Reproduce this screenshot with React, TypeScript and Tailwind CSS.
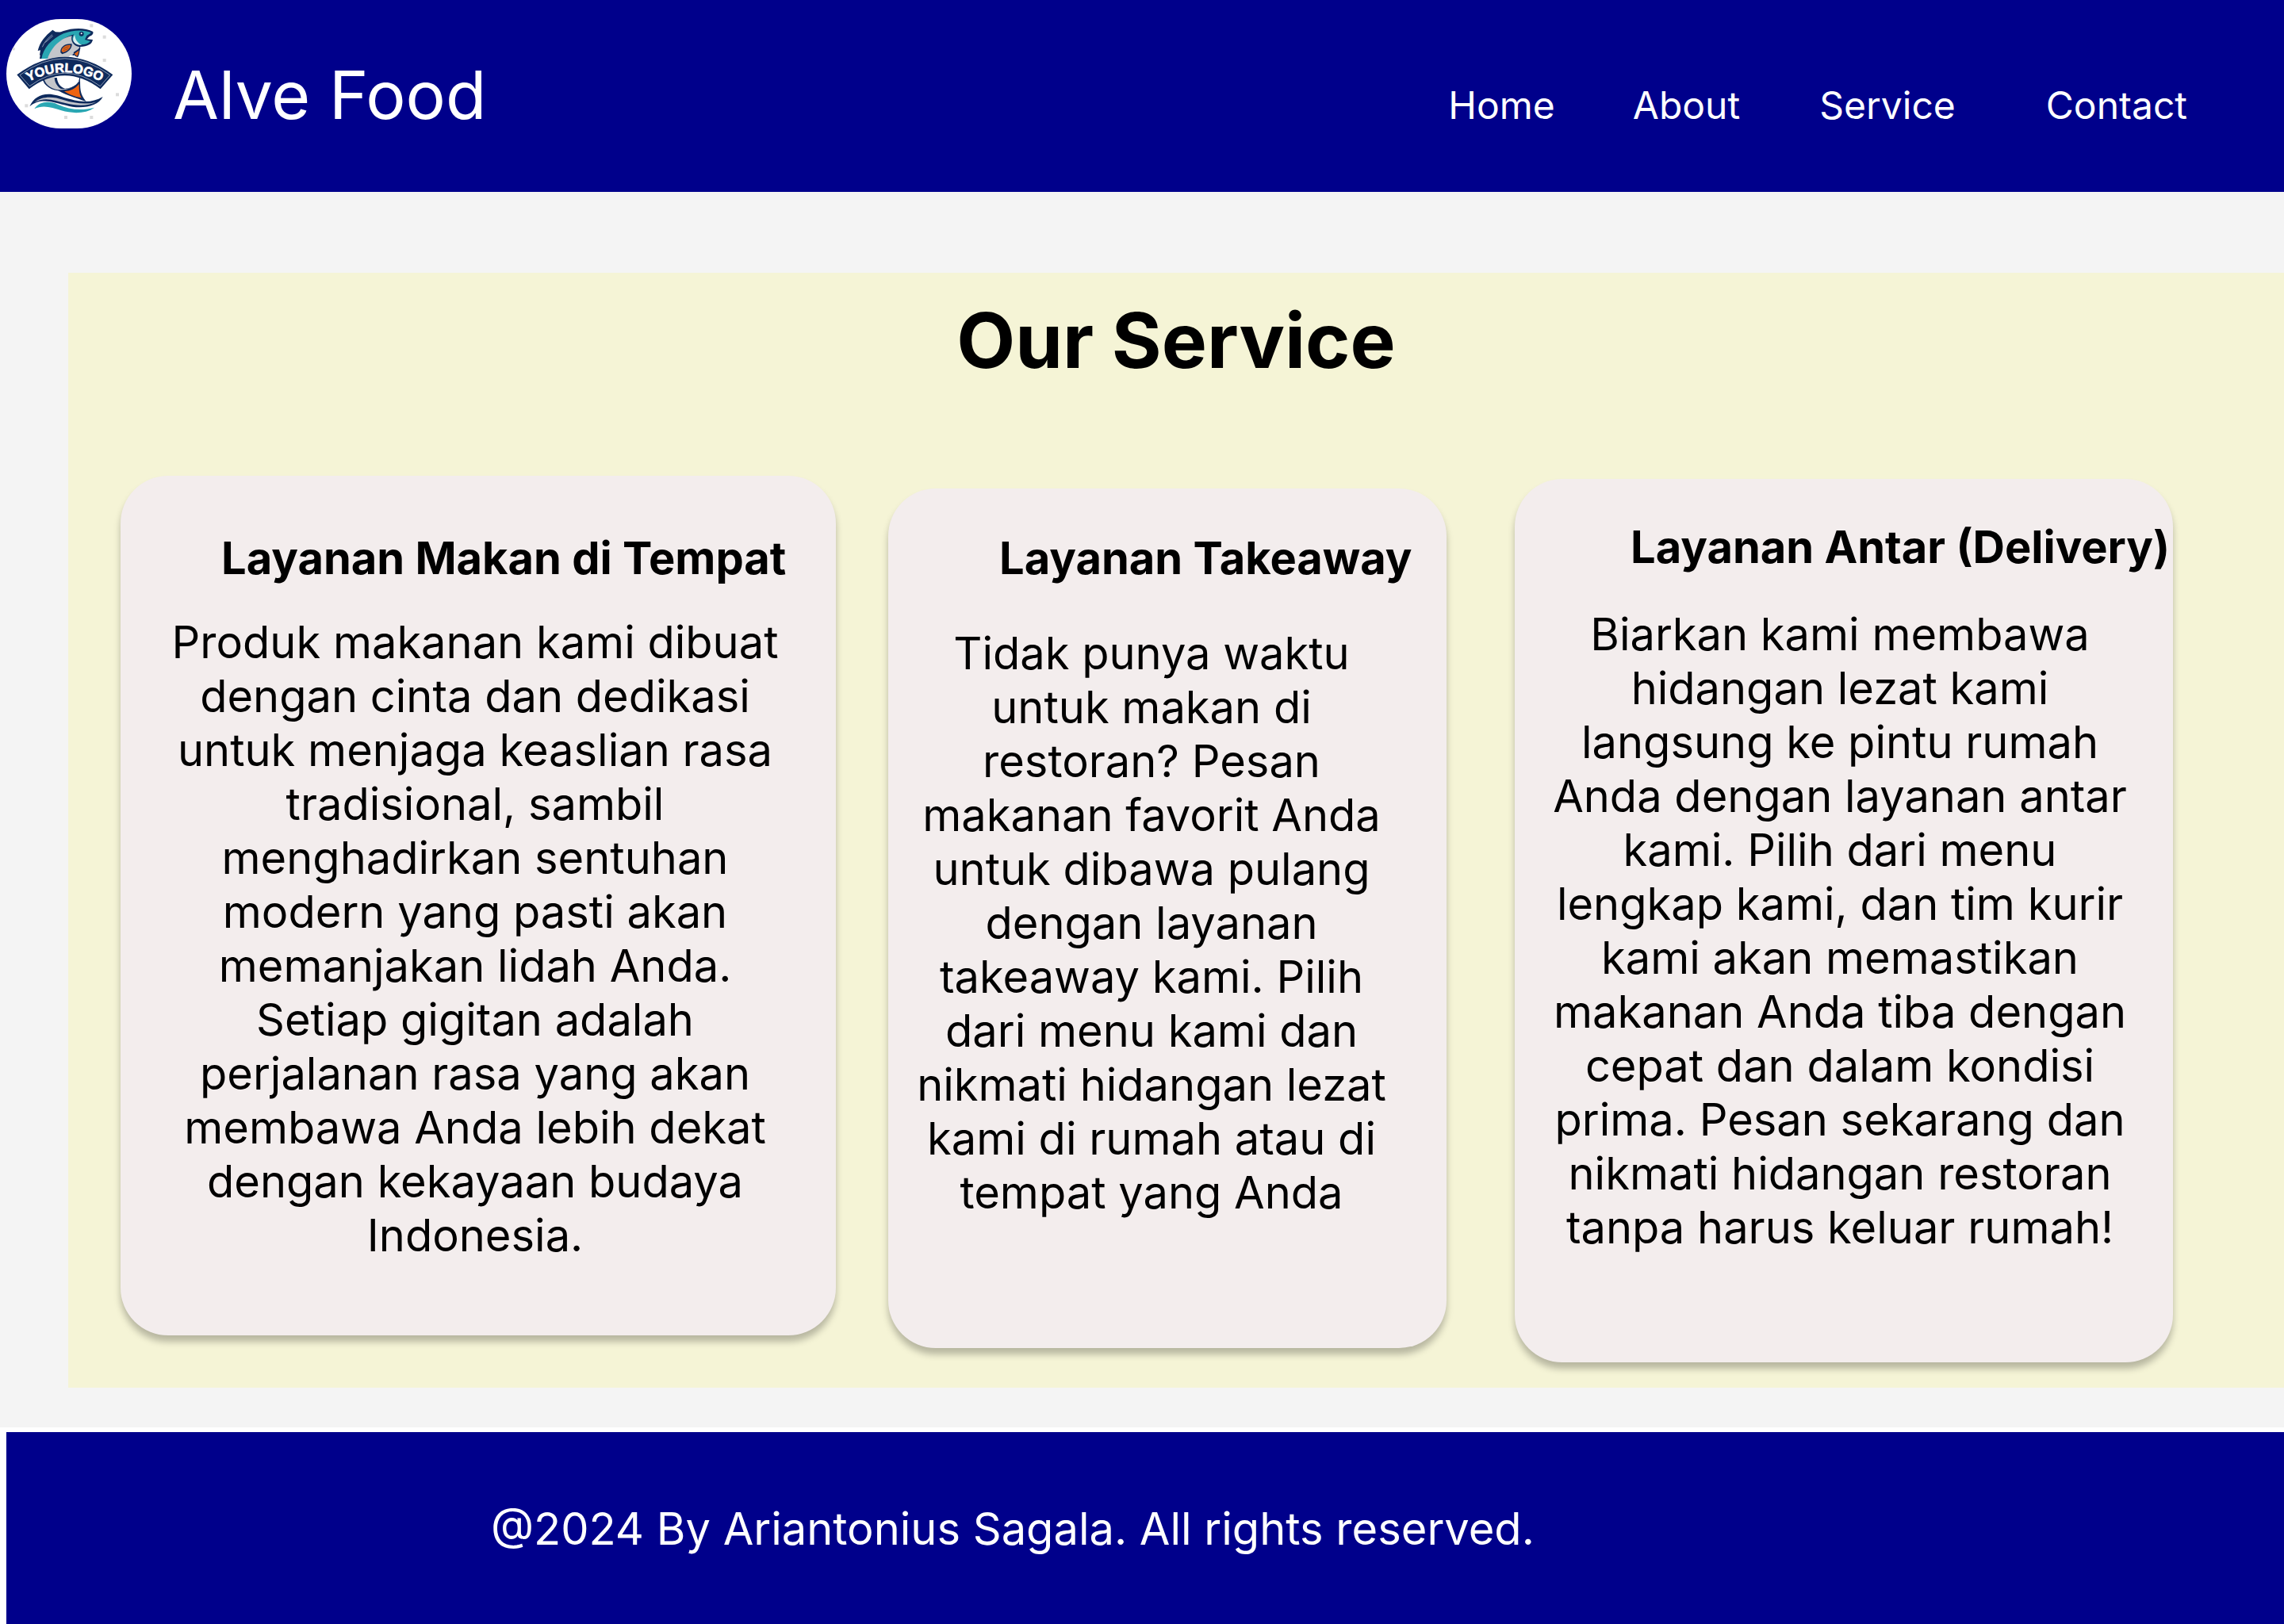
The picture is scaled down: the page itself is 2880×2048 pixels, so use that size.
import React from "react";

type Service = {
  title: string;
  text: string;
  card: string;
  heading: string;
  body: string;
};

const links = [
  { label: "Home", gap: "" },
  { label: "About", gap: "ml-[98px]" },
  { label: "Service", gap: "ml-[100px]" },
  { label: "Contact", gap: "ml-[114px]" },
];

const services: Service[] = [
  {
    title: "Layanan Makan di Tempat",
    text: "Produk makanan kami dibuat dengan cinta dan dedikasi untuk menjaga keaslian rasa tradisional, sambil menghadirkan sentuhan modern yang pasti akan memanjakan lidah Anda. Setiap gigitan adalah perjalanan rasa yang akan membawa Anda lebih dekat dengan kekayaan budaya Indonesia.",
    card: "flex-[902_1_0%] pt-[70px] pb-[92px]",
    heading: "pl-[127px]",
    body: "mt-[38px] pl-[60px] pr-[68px]",
  },
  {
    title: "Layanan Takeaway",
    text: "Tidak punya waktu untuk makan di restoran? Pesan makanan favorit Anda untuk dibawa pulang dengan layanan takeaway kami. Pilih dari menu kami dan nikmati hidangan lezat kami di rumah atau di tempat yang Anda",
    card: "flex-[704_1_0%] mt-4 ml-[66px] pt-[54px] pb-[162px]",
    heading: "pl-[140px]",
    body: "mt-[52px] pl-[32px] pr-[72px]",
  },
  {
    title: "Layanan Antar (Delivery)",
    text: "Biarkan kami membawa hidangan lezat kami langsung ke pintu rumah Anda dengan layanan antar kami. Pilih dari menu lengkap kami, dan tim kurir kami akan memastikan makanan Anda tiba dengan cepat dan dalam kondisi prima. Pesan sekarang dan nikmati hidangan restoran tanpa harus keluar rumah!",
    card: "flex-[830_1_0%] mt-1 ml-[86px] pt-[52px] pb-[136px]",
    heading: "pl-[146px]",
    body: "mt-[42px] pl-[42px] pr-[52px]",
  },
];

function Logo() {
  return (
    <svg
      viewBox="24 72 474 414"
      className="h-[138px] w-[158px] shrink-0 rounded-full bg-white"
      role="img"
      aria-label="Your logo"
    >
      <g fill="#dcdcdc">
        <rect x="340" y="91" width="12" height="12" />
        <rect x="389" y="134" width="12" height="12" />
        <rect x="389" y="222" width="12" height="12" />
        <rect x="438" y="352" width="12" height="12" />
        <rect x="243" y="438" width="12" height="12" />
        <rect x="340" y="438" width="12" height="12" />
        <rect x="94" y="394" width="12" height="12" />
        <rect x="46" y="180" width="10" height="10" />
      </g>
      {/* dorsal fin */}
      <path d="M143 192C150 160 170 136 199 113L210 121L238 122C200 142 172 172 156 212L150 208L153 190Z" fill="#0e2a5c" />
      <path d="M160 178C168 158 182 144 198 131M172 160L200 136" stroke="#8b9bb5" strokeWidth="3" fill="none" />
      {/* body */}
      <path
        d="M150 222C156 178 188 136 238 118C275 104 324 104 352 120C354 130 347 135 338 138L329 148L351 150C348 168 330 176 304 177C300 195 286 208 262 222Z"
        fill="#0e2a5c"
      />
      <path
        d="M157 222C164 182 195 147 240 127C275 113 318 112 344 123C343 128 334 130 328 135L321 150L342 156C332 168 310 172 290 166C270 158 272 140 280 130C235 140 200 180 180 222Z"
        fill="#2aa7b3"
      />
      <path d="M180 222C192 184 226 144 272 136C266 155 278 174 301 178C294 196 272 206 256 222Z" fill="#c4c6cb" />
      <path d="M283 132C268 150 280 172 310 171C296 164 284 152 283 132Z" fill="#d9eef0" />
      <circle cx="308" cy="128" r="9" fill="#0e2a5c" />
      <circle cx="308" cy="127" r="3" fill="#fff" />
      {/* side fins */}
      <path d="M229 199C226 178 246 163 272 166C273 184 258 199 235 205Z" fill="#0e2a5c" />
      <path d="M233 194C232 179 248 169 267 170C267 183 254 195 238 198Z" fill="#e0651c" />
      <path d="M240 184L260 176M240 191L260 184" stroke="#7a3a20" strokeWidth="2" />
      <path d="M258 218C266 206 274 206 284 214L278 218Z" fill="#fff" />
      <path d="M278 198L305 180C300 192 302 205 294 217L284 212Z" fill="#0e2a5c" />
      <path d="M281 203L298 191C298 200 295 207 291 213Z" fill="#e0651c" />
      {/* lower body and tail */}
      <path d="M160 296C168 332 208 350 256 341C290 333 308 312 302 290Z" fill="#0e2a5c" />
      <path d="M166 296C172 326 206 343 236 340C216 328 206 312 206 290Z" fill="#c4c6cb" />
      <path d="M215 290C216 312 226 328 246 335C280 332 302 316 300 290Z" fill="#fff" />
      <path d="M190 318C206 336 232 343 262 336C282 330 296 318 301 306" stroke="#c4c6cb" strokeWidth="5" fill="none" />
      <path d="M218 341C255 342 284 330 303 303C304 330 300 354 326 384C294 372 258 364 218 341Z" fill="#0e2a5c" />
      <path d="M243 345C266 345 284 336 299 318C299 340 300 356 308 370C288 366 264 360 243 345Z" fill="#ee6412" />
      {/* ribbon */}
      <path d="M64 283Q245 148 427 283L380 337Q245 235 110 337Z" fill="#0e2a5c" />
      <path d="M75 284Q245 159 416 284L379 326Q245 227 112 326Z" fill="none" stroke="#c9d1de" strokeWidth="2" />
      <path id="ribbon-baseline" d="M104 311Q245 236 386 311" fill="none" />
      <text fill="#fff" stroke="#fff" strokeWidth="2" fontSize="49" fontWeight="700" fontFamily="'Liberation Sans', Arial, sans-serif">
        <textPath href="#ribbon-baseline" startOffset="50%" textAnchor="middle">
          YOURLOGO
        </textPath>
      </text>
      {/* waves */}
      <path d="M112 403C130 362 168 348 216 361C272 378 334 400 389 366C372 400 324 410 274 404C214 394 160 362 112 403Z" fill="#0e2a5c" />
      <path d="M130 388C158 363 200 364 240 378C284 392 328 396 364 386C330 402 290 400 250 391C208 380 168 364 130 388Z" fill="#c4c6cb" />
      <path d="M130 412C148 384 184 380 218 395C262 414 306 420 357 407C326 430 276 431 232 418C196 406 162 396 130 412Z" fill="#2aa7b3" />
    </svg>
  );
}

export default function App() {
  return (
    <div className="min-h-screen bg-white font-['Inter',sans-serif] text-black">
      <header className="flex items-start bg-[#00008b] pt-6 pb-[71px] pl-2 text-white">
        <Logo />
        <div className="flex flex-1 items-baseline justify-between pt-[45px] pr-[122px] pl-[52px]">
          <p className="text-[84px] leading-[102px] whitespace-nowrap">Alve Food</p>
          <nav className="flex text-5xl leading-[58px]">
            {links.map((link) => (
              <a key={link.label} href="#" className={link.gap}>
                {link.label}
              </a>
            ))}
          </nav>
        </div>
      </header>

      <main className="bg-[#f4f4f4] pt-[102px] pb-[50px] pl-[86px]">
        <section className="bg-[#f5f4d6] pt-[27px] pb-8">
          <h1 className="text-center text-8xl leading-[116px] font-bold">Our Service</h1>
          <div className="mt-[113px] flex items-start pr-[140px] pl-[66px]">
            {services.map((service) => (
              <article
                key={service.title}
                className={`min-w-0 rounded-[60px] bg-[#f3eded] text-[56px] leading-[68px] shadow-[0_8px_8px_rgba(0,0,0,0.25)] ${service.card}`}
              >
                <h2 className={`font-bold whitespace-nowrap ${service.heading}`}>{service.title}</h2>
                <p className={`text-center ${service.body}`}>{service.text}</p>
              </article>
            ))}
          </div>
        </section>
      </main>

      <footer className="mt-1.5 ml-2 bg-[#00008b] pt-[88px] pb-[86px] pl-[611px] text-[56px] leading-[68px] text-white">
        <p>@2024 By Ariantonius Sagala. All rights reserved.</p>
      </footer>
    </div>
  );
}
